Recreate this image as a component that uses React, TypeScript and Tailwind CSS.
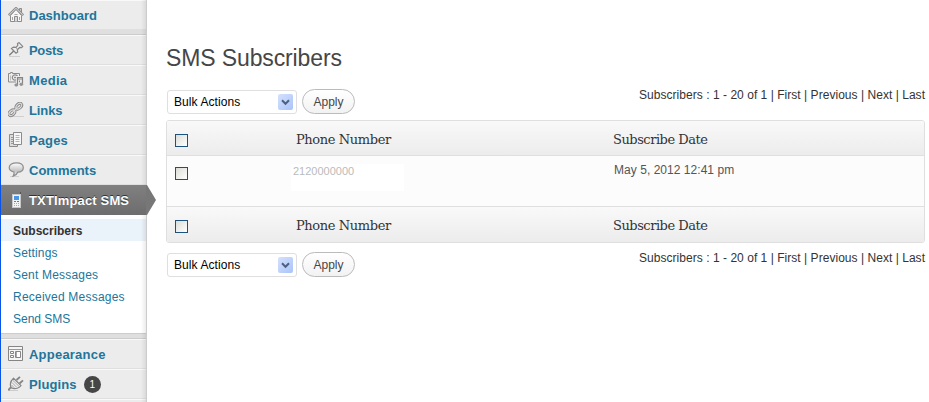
import React from "react";

type IconName = "home" | "pin" | "media" | "link" | "pages" | "comment" | "phone" | "appearance" | "plug";

function MenuIcon({ name }: { name: IconName }) {
  return (
    <svg width="17" height="17" viewBox="0 0 17 17" fill="none" stroke="#8b8b8b" strokeWidth="1" className="mt-px shrink-0">
      {name === "home" && (
        <>
          <path d="M2.500 8.500v6h11v-6L8 2.500z" fill="#f6f6f6" />
          <path d="M11.500 4V1.500h2V6" fill="#ccc" />
          <path d="M.7 8.300 8 1l7.300 7.300" strokeWidth="2.300" stroke="#909090" />
          <path d="M1.200 7.900 8 1.300l6.800 6.600" stroke="#e4e4e4" strokeWidth=".8" />
          <path d="M6.500 14.500v-5h3v5" fill="#d8d8d8" />
          <path d="M4.500 10v3M11.500 10v3M6.500 7.500h3" stroke="#a5a5a5" />
        </>
      )}
      {name === "pin" && (
        <>
          <path d="M1 14.500h11" stroke="#cfcfcf" />
          <path d="M1.300 13.300 5.700 9" stroke="#777" strokeWidth="1.200" />
          <path d="m3.500 6.500 2-1.400 2.500.2 1.800-2L9.500 1.500 11 .6l3.700 3.800-1.200 1.300-1.800-.2-2.400 2.200.4 2.300L8 11.200z" fill="#eee" stroke="#858585" strokeWidth="1.200" />
          <path d="m7.900 5.600 1.800 1.700" stroke="#999" />
        </>
      )}
      {name === "media" && (
        <>
          <path d="M.5 1.500h2v-1h2v1h7v8.500H.5z" fill="#eee" />
          <path d="M2.500 3.500v5" stroke="#bbb" />
          <circle cx="7" cy="5.500" r="2.600" fill="#fff" strokeWidth="1.300" />
          <circle cx="7" cy="5.500" r=".9" fill="#777" stroke="none" />
          <path d="M9.500 12.500V5.500h5V11.500M9.500 7h5" stroke="#ededed" strokeWidth="3" />
          <path d="M9.500 12.500V5.500h5V11.500M9.500 7h5" stroke="#858585" strokeWidth="1.200" />
          <ellipse cx="8.300" cy="13" rx="1.500" ry="1.100" fill="#999" />
          <ellipse cx="13.300" cy="12.300" rx="1.500" ry="1.100" fill="#999" />
        </>
      )}
      {name === "link" && (
        <>
          <path d="M2 14.500h14" stroke="#d0d0d0" />
          <g strokeWidth="2.900" stroke="#858585">
            <ellipse cx="3.900" cy="10.800" rx="3.400" ry="2.200" transform="rotate(-43 3.900 10.800)" />
            <ellipse cx="10.800" cy="4.200" rx="3.400" ry="2.200" transform="rotate(-43 10.800 4.200)" />
            <path d="m5 9.700 4.600-4.400" />
          </g>
          <g strokeWidth="1.200" stroke="#ddd">
            <ellipse cx="3.900" cy="10.800" rx="3.400" ry="2.200" transform="rotate(-43 3.900 10.800)" />
            <ellipse cx="10.800" cy="4.200" rx="3.400" ry="2.200" transform="rotate(-43 10.800 4.200)" />
            <path d="m5 9.700 4.600-4.400" />
          </g>
        </>
      )}
      {name === "pages" && (
        <>
          <path d="M1.500 2.500h8v12h-8z" fill="#ddd" />
          <path d="M3 5.500h2M3 7.500h2M3 9.500h2M3 11.500h2" stroke="#999" />
          <path d="M5.500.5h8v12h-8z" fill="#f7f7f7" />
          <path d="M7.500 3.500h4M7.500 5.500h4M7.500 7.500h4M7.500 9.500h4" stroke="#b5b5b5" />
        </>
      )}
      {name === "comment" && (
        <>
          <path d="M2 14.500h9" stroke="#d0d0d0" />
          <path d="M8.500.8c4 0 6.800 1.900 6.800 4.700s-2.500 4.600-5.600 4.700c-.7 1.800-2.200 3.400-4.500 4 .8-1.200 1-2.800.8-4.200C3 9.400 1.200 7.800 1.200 5.500 1.200 2.700 4.500.8 8.500.8z" fill="url(#bubble)" stroke="#8c8c8c" strokeWidth="1.200" />
          <defs>
            <linearGradient id="bubble" x2="0" y2="1">
              <stop stopColor="#fff" /><stop offset=".6" stopColor="#c4c4c4" /><stop offset="1" stopColor="#eee" />
            </linearGradient>
          </defs>
        </>
      )}
      {name === "phone" && (
        <g stroke="none">
          <path d="M12 0h1v4h-1z" fill="#555" />
          <path d="M4 2h9v14H4z" fill="#c8c8c8" />
          <path d="M5 3h7v12H5z" fill="#f4f4f4" />
          <path d="M6 4h5v4H6z" fill="#4a97ea" />
          <path d="M6 9h2v1H6z" fill="#35aa4c" /><path d="M9 9h2v1H9z" fill="#df4a3f" />
          <path d="M6 11h1v1H6zm2 0h1v1H8zm2 0h1v1h-1zM6 13h1v1H6zm2 0h1v1H8zm2 0h1v1h-1z" fill="#aaa" />
        </g>
      )}
      {name === "appearance" && (
        <>
          <path d="M.5.5h14v14H.5z" fill="#f5f5f5" stroke="#858585" />
          <path d="M1 3.500h13" stroke="#999" strokeWidth="1" />
          <path d="M2.500 5.500h3v2h-3zM2.500 9.500h3v2h-3zM7.500 5.500h5v6h-5z" stroke="#858585" fill="#fff" />
          <path d="M8.500 6v5" stroke="#aaa" />
        </>
      )}
      {name === "plug" && (
        <>
          <path d="M1 14.500h9" stroke="#ccc" />
          <path d="M3.500 11c-1 1-2.500 1.200-3 3.500M8.500 4 12 .8M11.500 7.500 15 4.300" stroke="#858585" strokeWidth="1.800" />
          <path d="M5.500 2.300 13 9.500c-1.300 2.300-5.500 4.300-9.700 2.300C1.500 8.300 3 4.500 5.500 2.300z" fill="#ededed" stroke="#858585" strokeWidth="1.200" />
          <path d="m5 4.500 6.200 6M4 6.500l4.700 4.800M3.500 9l2.700 2.700" stroke="#999" strokeWidth=".8" />
        </>
      )}
    </svg>
  );
}

function MenuRow({ icon, label, badge, spacing = "tracking-normal" }: { icon: IconName; label: string; badge?: string; spacing?: string }) {
  return (
    <div className="flex h-[30px] items-center border-t border-b border-t-[#f9f9f9] border-b-[#dfdfdf] pl-[7px]">
      <MenuIcon name={icon} />
      <span className={"ml-1 pt-[2px] text-[13px] leading-[18px] font-bold text-[#21759b] " + spacing}>{label}</span>
      {badge && <span className="ml-[7px] flex h-[17px] w-[17px] items-center justify-center rounded-full bg-[#464646] text-[10px] text-white">{badge}</span>}
    </div>
  );
}

function Separator() {
  return <div className="h-[5px] border-b border-b-[#ccc] bg-[#dfdfdf]" />;
}

function BulkBar() {
  return (
    <div className="flex h-[25px] justify-between">
      <div className="flex gap-[5px] pl-px">
        <div className="mt-px flex h-[24px] w-[130px] items-center justify-between rounded-[3px] border border-[#dfdfdf] bg-white pr-[3px] pl-[6px] text-[12px] tracking-[0.08px] text-black">
          <span>Bulk Actions</span>
          <span className="flex h-4 w-[15px] items-center justify-center rounded-[2px] bg-linear-to-br from-[#d5e1fc] to-[#a9c4f9]">
            <svg width="9" height="7" viewBox="0 0 9 7" fill="none" stroke="#4d6185" strokeWidth="2"><path d="m1 1.300 3.500 3.500L8 1.300" /></svg>
          </span>
        </div>
        <button className="h-[25px] w-[53px] rounded-full border border-[#bbb] bg-linear-to-b from-white to-[#f2f2f2] text-[12px] text-[#464646]">Apply</button>
      </div>
      <div className="-mt-px h-[14px] text-[12px] leading-[14px] tracking-[0.035px] whitespace-pre text-[#333]">Subscribers : 1 - 20 of 1 | First | Previous | Next | Last</div>
    </div>
  );
}

function Check() {
  return <span className="h-[13px] w-[13px] shrink-0 border border-[#1c5180] bg-linear-to-br from-[#dcdcd7] to-white" />;
}

function HeadRow({ height }: { height: string }) {
  return (
    <div className={"flex bg-linear-to-b from-[#f9f9f9] to-[#ececec] pl-2 font-['DejaVu_Serif',serif] text-[13px] leading-[18px] text-[#333] " + height}>
      <div className="flex w-[121px] items-start pt-[13px]"><Check /></div>
      <div className="w-[317px] pt-[10px] tracking-[-0.38px]">Phone Number</div>
      <div className="pt-[10px] tracking-[-0.48px]">Subscribe Date</div>
    </div>
  );
}

export default function App() {
  return (
    <div className="flex h-[402px] w-[929px] overflow-hidden bg-white font-['Liberation_Sans',Arial,sans-serif]">
      <nav className="relative h-full w-[147px] shrink-0 border-r border-l border-r-[#ccc] border-l-[#0b55e6] bg-[#ececec]">
        <MenuRow icon="home" label="Dashboard" />
        <Separator />
        <MenuRow icon="pin" label="Posts" spacing="tracking-[-0.3px]" />
        <MenuRow icon="media" label="Media" spacing="tracking-[0.3px]" />
        <MenuRow icon="link" label="Links" spacing="tracking-[-0.1px]" />
        <MenuRow icon="pages" label="Pages" spacing="tracking-[0.1px]" />
        <MenuRow icon="comment" label="Comments" />
        <div className="relative z-10 flex h-[30px] items-center bg-linear-to-b from-[#808080] to-[#6d6d6d] pl-[7px] text-[13px] font-bold text-white">
          <MenuIcon name="phone" />
          <span className="ml-1 pt-[2px] tracking-[0.15px] whitespace-nowrap [text-shadow:0_-1px_0_#333]">TXTImpact SMS</span>
          <svg className="absolute top-0 left-[145px]" width="11" height="30" viewBox="0 0 11 30"><path d="M0 0h1l9 15-9 15H0z" fill="#777" /></svg>
        </div>
        <div className="h-[118px] bg-white pt-1 text-[12px] leading-[24px] text-[#21759b]">
          <div className="h-[22px] bg-[#eaf2fa] pl-3 font-bold text-[#333]">Subscribers</div>
          <div className="h-[22px] pl-3 tracking-[0.16px]">Settings</div>
          <div className="h-[22px] pl-3 tracking-[0.2px]">Sent Messages</div>
          <div className="h-[22px] pl-3 tracking-[0.22px]">Received Messages</div>
          <div className="h-[22px] pl-3">Send SMS</div>
        </div>
        <div className="h-[6px] border-t border-b border-[#ccc] bg-[#dfdfdf]" />
        <MenuRow icon="appearance" label="Appearance" spacing="tracking-[0.22px]" />
        <MenuRow icon="plug" label="Plugins" badge="1" spacing="tracking-[0.1px]" />
        <div className="h-[3px] border-t border-[#f9f9f9]" />
        <div className="absolute top-0 right-0 h-full w-[5px] bg-linear-to-r from-transparent to-black/8" />
      </nav>
      <main className="w-[778px] pt-[44px] pl-[19px]">
        <h1 className="h-[45px] text-[23px] leading-[28px] tracking-[-0.12px] text-[#464646]">SMS Subscribers</h1>
        <BulkBar />
        <div className="mt-[6px] mb-[9px] h-[123px] overflow-hidden rounded-[3px] border border-[#dfdfdf]">
          <HeadRow height="h-[34px]" />
          <div className="flex h-[52px] border-t border-b border-[#dfdfdf] bg-[#fcfcfc] pl-2">
            <div className="w-[116px] pt-[11px]"><div className="flex"><Check /></div></div>
            <div className="mt-[8px] h-[27px] w-[113px] bg-white pl-[2px] text-[11px] leading-[15px] text-[#bbb]">2120000000</div>
            <div className="pt-[7px] pl-[210px] text-[12px] leading-[14px] tracking-[0.04px] text-[#555]">May 5, 2012 12:41 pm</div>
          </div>
          <HeadRow height="h-[35px]" />
        </div>
        <BulkBar />
      </main>
    </div>
  );
}
